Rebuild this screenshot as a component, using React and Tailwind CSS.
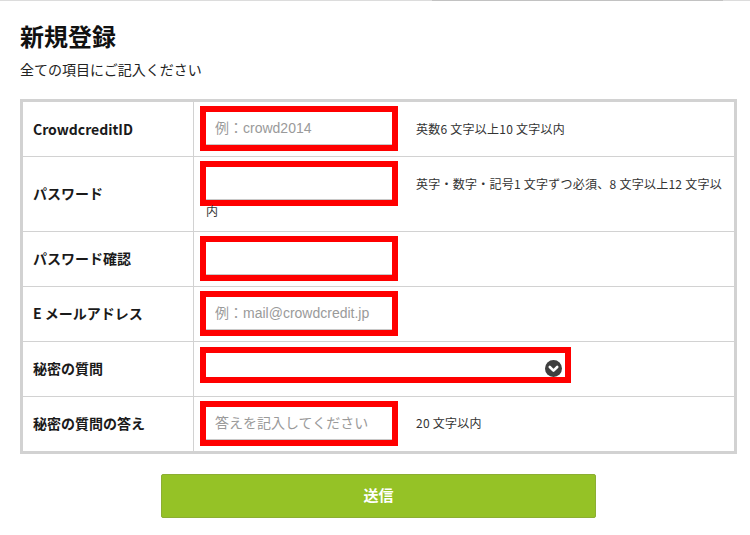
import { useState } from 'react';

const FONT = { fontFamily: '"Noto Sans CJK JP", sans-serif' };

function ChevronCircle() {
  return (
    <svg width="17" height="17" viewBox="0 0 17 17">
      <circle cx="8.5" cy="8.5" r="8.5" fill="#3f3f3f" />
      <polyline points="4.8,7 8.5,10.6 12.2,7" fill="none" stroke="#fff" strokeWidth="2.6" strokeLinecap="round" strokeLinejoin="round" />
    </svg>
  );
}

function TextInput({ placeholder }) {
  return (
    <input
      readOnly
      placeholder={placeholder}
      className="inline-block align-middle w-[186px] h-[33px] bg-white border-0 border-b border-[#c8c8c8] pl-[9px] text-[14px] tracking-normal placeholder:text-[#9a9a9a] outline-6 outline-solid outline-[#ff0000]"
      style={{ fontFamily: '"Liberation Sans", "Noto Sans CJK JP", sans-serif' }}
    />
  );
}

const ROWS = [
  { label: 'CrowdcreditID', placeholder: '例：crowd2014', hint: '英数6 文字以上10 文字以内' },
  { label: 'パスワード', placeholder: '', hint: '英字・数字・記号1 文字ずつ必須、8 文字以上12 文字以内' },
  { label: 'パスワード確認', placeholder: '' },
  { label: 'E メールアドレス', placeholder: '例：mail@crowdcredit.jp' },
  { label: '秘密の質問', select: true },
  { label: '秘密の質問の答え', placeholder: '答えを記入してください', hint: '20 文字以内' },
];

export default function App() {
  const [sent, setSent] = useState(false);

  return (
    <div className="w-[750px] h-[535px] bg-white text-[#222]" style={FONT}>
      {/* top edge */}
      <div className="h-px w-full bg-[#dcdcdc] flex">
        <div className="ml-[432px] w-[291px] h-full bg-[#c2c2c2]" />
      </div>

      <div className="pl-[20px] pt-[19px]">
        <h1 className="text-[24px] leading-[32px] font-bold text-[#111]">新規登録</h1>
        <p className="mt-[7px] text-[14px] leading-[20px] text-[#222]">全ての項目にご記入ください</p>

        {/* Form table */}
        <div className="mt-[20px] w-[717px] border-[3px] border-[#d2d2d2]">
          {ROWS.map((row, i) => (
            <div
              key={i}
              className={`grid grid-cols-[171px_1fr] ${i < ROWS.length - 1 ? 'border-b border-[#d2d2d2]' : ''}`}
            >
              <div className="border-r border-[#d2d2d2] pl-[10px] flex items-center text-[14px] font-bold text-[#1a1a1a]">
                {row.label}
              </div>
              <div className="min-h-[54px] pl-[12px] pr-[12px] pt-[10px] pb-[11px] flex items-center">
                {row.select ? (
                  <div className="relative w-[359px] h-[24px] mb-[7px] bg-white outline-6 outline-solid outline-[#ff0000]">
                    <div className="absolute right-[3px] bottom-0 leading-none">
                      <ChevronCircle />
                    </div>
                  </div>
                ) : (
                  <div className="text-[12px] leading-[18px] text-[#333]">
                    <TextInput placeholder={row.placeholder} />
                    {row.hint && <span className="ml-[24px] align-middle tracking-[0.25px]">{row.hint}</span>}
                  </div>
                )}
              </div>
            </div>
          ))}
        </div>

        <div className="w-[717px] flex justify-center mt-[20px]">
          <button
            onClick={() => setSent(true)}
            className="w-[435px] h-[44px] bg-[#95c226] border border-[#8cae33] rounded-[2px] text-white font-bold text-[15px]"
          >
            {sent ? '送信' : '送信'}
          </button>
        </div>
      </div>
    </div>
  );
}
